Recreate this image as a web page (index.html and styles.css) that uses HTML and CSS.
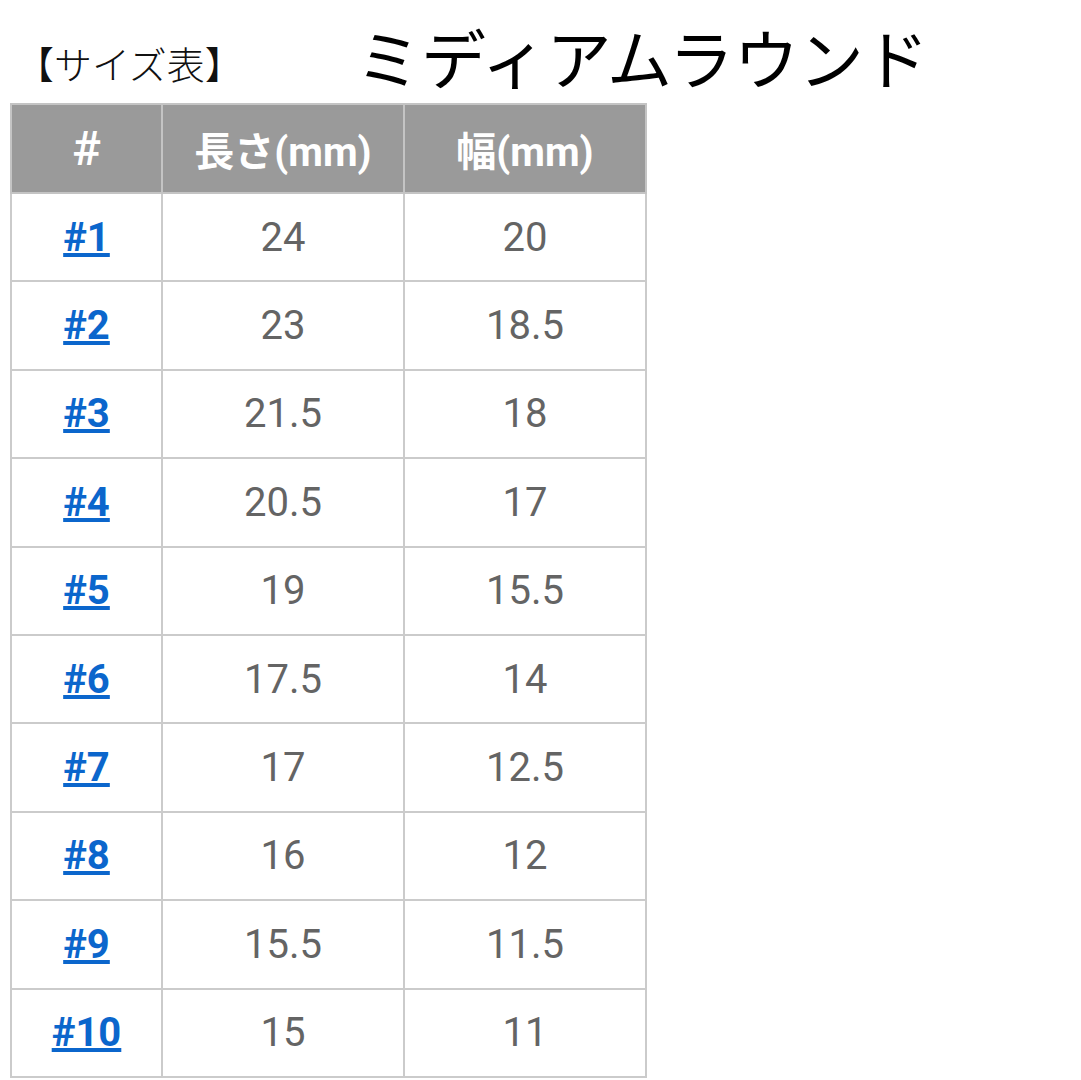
FILE: index.html
```html
<!DOCTYPE html>
<html lang="ja">
<head>
<meta charset="utf-8">
<link rel="stylesheet" href="styles.css">
</head>
<body>
<div class="head">
  <div class="label">【サイズ表】</div>
  <div class="title">ミディアムラウンド</div>
</div>
<table class="size">
  <colgroup><col class="c1"><col class="c2"><col class="c3"></colgroup>
  <thead>
    <tr><th class="hash">#</th><th>長さ(mm)</th><th>幅(mm)</th></tr>
  </thead>
  <tbody>
    <tr><td><a href="#">#1</a></td><td>24</td><td>20</td></tr>
    <tr><td><a href="#">#2</a></td><td>23</td><td>18.5</td></tr>
    <tr><td><a href="#">#3</a></td><td>21.5</td><td>18</td></tr>
    <tr><td><a href="#">#4</a></td><td>20.5</td><td>17</td></tr>
    <tr><td><a href="#">#5</a></td><td>19</td><td>15.5</td></tr>
    <tr><td><a href="#">#6</a></td><td>17.5</td><td>14</td></tr>
    <tr><td><a href="#">#7</a></td><td>17</td><td>12.5</td></tr>
    <tr><td><a href="#">#8</a></td><td>16</td><td>12</td></tr>
    <tr><td><a href="#">#9</a></td><td>15.5</td><td>11.5</td></tr>
    <tr><td><a href="#">#10</a></td><td>15</td><td>11</td></tr>
  </tbody>
</table>
</body>
</html>
```
FILE: styles.css
```css
html, body {
  margin: 0;
  padding: 0;
  background: #fff;
}
body {
  padding: 0 0 0 10px;
  font-family: Roboto, "Noto Sans CJK JP", sans-serif;
}
.head {
  display: flex;
  align-items: center;
  height: 103px;
}
.label {
  font-family: "Noto Sans CJK JP", sans-serif;
  font-weight: 300;
  font-size: 38px;
  color: #111;
  width: 340px;
  padding-left: 6px;
  padding-top: 22px;
}
.title {
  font-family: "Noto Sans CJK JP", sans-serif;
  font-size: 65px;
  color: #000;
  padding-top: 8px;
}
.size {
  border-collapse: collapse;
  width: 635px;
  table-layout: fixed;
  font-size: 40px;
  text-align: center;
}
.c1 { width: 151px; }
.c2 { width: 242px; }
.c3 { width: 242px; }
.size th, .size td {
  border: 2px solid #cbcbcb;
  padding: 0;
}
.size th {
  background: #9a9a9a;
  color: #fff;
  font-weight: bold;
  height: 87px;
  border-color: #c4c4c4;
}
.size th.hash {
  font-size: 48px;
  font-weight: 500;
}
.size td {
  height: 86.4px;
  color: #646464;
}
.size td a {
  color: #0b66cc;
  font-weight: bold;
  text-decoration: underline;
}
```
